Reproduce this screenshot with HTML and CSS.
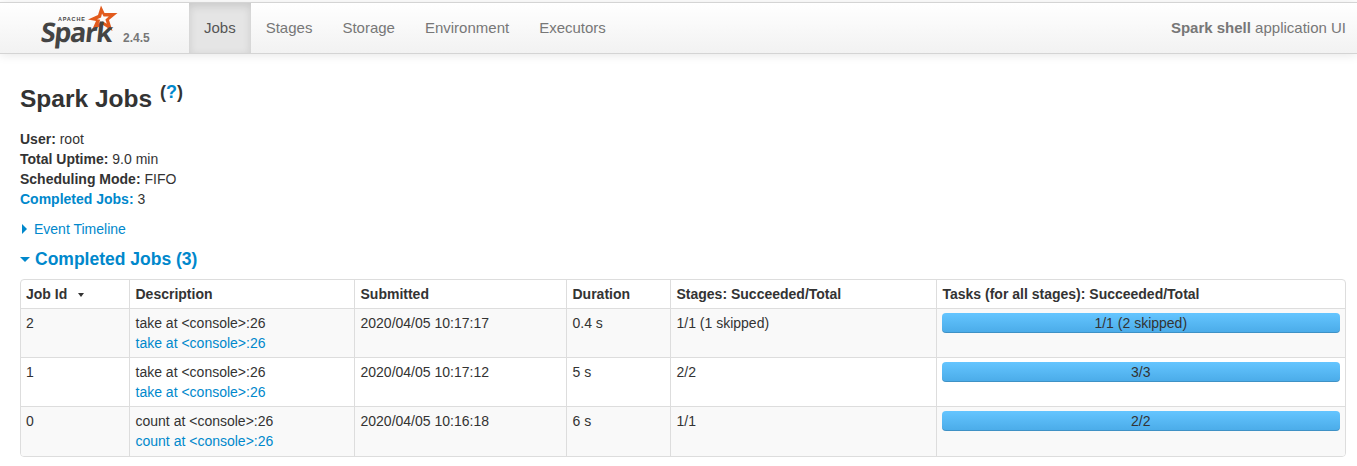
FILE: index.html
```html
<!DOCTYPE html>
<html lang="en">
<head>
<meta charset="utf-8">
<title>Spark shell - Spark Jobs</title>
<link rel="stylesheet" href="styles.css">
</head>
<body>
<header class="navbar">
  <div class="brand">
    <div class="logo">
      <svg class="logo-star" viewBox="0 0 36 32" width="36" height="32" aria-hidden="true">
        <path d="M16 2.500 L19.500 10 L32.500 10 L24 17 L27.500 28 L18 22 L7 27 L11 18 L3 16.500 L13 12 Z M17 10.600 L16 14.400 L12 16.200 L15.200 16.800 L13.600 20.400 L18 18.400 L21.800 20.800 L20.400 16.400 L23.800 13.600 L18.600 13.600 Z" fill="#e25a1c" fill-rule="evenodd"/>
      </svg>
      <span class="logo-apache">APACHE</span>
      <span class="logo-spark">Spark</span>
    </div>
    <span class="version">2.4.5</span>
  </div>
  <nav class="tabs">
    <a class="tab active">Jobs</a>
    <a class="tab">Stages</a>
    <a class="tab">Storage</a>
    <a class="tab">Environment</a>
    <a class="tab">Executors</a>
  </nav>
  <p class="app"><strong>Spark shell</strong> application UI</p>
</header>
<main class="content">
  <h1 class="title">Spark Jobs <sup class="help">(<a>?</a>)</sup></h1>
  <ul class="summary">
    <li><strong>User:</strong> root</li>
    <li><strong>Total Uptime:</strong> 9.0 min</li>
    <li><strong>Scheduling Mode:</strong> FIFO</li>
    <li><strong class="blue">Completed Jobs:</strong> 3</li>
  </ul>
  <div class="timeline"><span class="arrow-right"></span><a>Event Timeline</a></div>
  <h2 class="section"><span class="arrow-down"></span>Completed Jobs (3)</h2>
  <div class="table-wrap">
    <table class="jobs">
      <colgroup>
        <col class="c1"><col class="c2"><col class="c3"><col class="c4"><col class="c5"><col>
      </colgroup>
      <thead>
        <tr>
          <th>Job Id <span class="sort"></span></th>
          <th>Description</th>
          <th>Submitted</th>
          <th>Duration</th>
          <th>Stages: Succeeded/Total</th>
          <th>Tasks (for all stages): Succeeded/Total</th>
        </tr>
      </thead>
      <tbody>
        <tr class="odd">
          <td>2</td>
          <td>take at &lt;console&gt;:26<a class="link">take at &lt;console&gt;:26</a></td>
          <td>2020/04/05 10:17:17</td>
          <td>0.4 s</td>
          <td>1/1 (1 skipped)</td>
          <td class="bar-cell"><div class="bar">1/1 (2 skipped)</div></td>
        </tr>
        <tr>
          <td>1</td>
          <td>take at &lt;console&gt;:26<a class="link">take at &lt;console&gt;:26</a></td>
          <td>2020/04/05 10:17:12</td>
          <td>5 s</td>
          <td>2/2</td>
          <td class="bar-cell"><div class="bar">3/3</div></td>
        </tr>
        <tr class="odd">
          <td>0</td>
          <td>count at &lt;console&gt;:26<a class="link">count at &lt;console&gt;:26</a></td>
          <td>2020/04/05 10:16:18</td>
          <td>6 s</td>
          <td>1/1</td>
          <td class="bar-cell"><div class="bar">2/2</div></td>
        </tr>
      </tbody>
    </table>
  </div>
</main>
</body>
</html>
```
FILE: styles.css
```css
* { box-sizing: border-box; }
html, body { margin: 0; padding: 0; }
body {
  font-family: "Liberation Sans", Arial, sans-serif;
  font-size: 14px;
  line-height: 20px;
  color: #333;
  background: #fff;
  overflow: hidden;
}
.navbar {
  display: flex;
  align-items: stretch;
  height: 52px;
  margin-top: 2px;
  border-top: 1px solid #d4d4d4;
  border-bottom: 1px solid #d4d4d4;
  background: linear-gradient(to bottom, #fff, #f2f2f2);
  box-shadow: 0 1px 10px rgba(0, 0, 0, .1);
}
.brand {
  display: flex;
  width: 189px;
  flex: none;
}
.logo {
  position: relative;
  width: 123px;
  flex: none;
}
.logo-star { position: absolute; left: 85px; top: 0; }
.logo-apache {
  position: absolute;
  left: 58px;
  top: 13px;
  font-size: 5.500px;
  line-height: 6px;
  font-weight: 700;
  letter-spacing: .8px;
  color: #444;
}
.logo-spark {
  position: absolute;
  left: 41px;
  top: 18px;
  font-family: "Open Sans", "Liberation Sans", sans-serif;
  font-size: 27px;
  line-height: 22px;
  font-weight: 700;
  letter-spacing: -1.300px;
  color: #444;
  transform: skewX(-6deg);
}
.version {
  font-size: 12px;
  font-weight: 700;
  color: #777;
  line-height: 14px;
  margin-top: 28px;
}
.tabs { display: flex; }
.tab {
  display: flex;
  align-items: center;
  padding: 0 15px;
  font-size: 15px;
  color: #777;
}
.tab.active {
  color: #555;
  background: #e5e5e5;
  box-shadow: inset 0 3px 8px rgba(0, 0, 0, .125);
}
.app {
  margin: 0 11px 0 auto;
  align-self: center;
  font-size: 15px;
  color: #777;
}
.content { padding: 0 11px 0 20px; }
.title {
  margin: 25px 0 0;
  font-size: 24.500px;
  line-height: 40px;
  font-weight: 700;
  color: #333;
}
.help {
  font-size: 18px;
  line-height: 0;
  font-weight: 700;
  vertical-align: baseline;
  position: relative;
  top: -9px;
  margin-left: 1px;
}
.help a, .blue { color: #0088cc; }
.summary {
  list-style: none;
  margin: 10px 0 0;
  padding: 0;
}
.timeline {
  display: flex;
  align-items: center;
  margin-top: 10px;
  color: #0088cc;
}
.arrow-right {
  width: 0;
  height: 0;
  margin: 0 7px 0 2px;
  border-left: 5px solid #0088cc;
  border-top: 5px solid transparent;
  border-bottom: 5px solid transparent;
}
.section {
  display: flex;
  align-items: center;
  margin: 10px 0 0;
  font-size: 17.500px;
  line-height: 20px;
  font-weight: 700;
  color: #0088cc;
}
.arrow-down {
  width: 0;
  height: 0;
  margin-right: 5px;
  border-top: 5px solid #0088cc;
  border-left: 5px solid transparent;
  border-right: 5px solid transparent;
}
.table-wrap {
  margin-top: 10px;
  border: 1px solid #ddd;
  border-radius: 4px;
  overflow: hidden;
}
.jobs {
  width: 100%;
  table-layout: fixed;
  border-collapse: collapse;
}
.c1 { width: 108px; }
.c2 { width: 225px; }
.c3 { width: 212px; }
.c4 { width: 104px; }
.c5 { width: 266px; }
.jobs th, .jobs td {
  padding: 4px 5px 4px 6px;
  text-align: left;
  vertical-align: top;
  border-left: 1px solid #ddd;
  border-top: 1px solid #ddd;
}
.jobs th:first-child, .jobs td:first-child { border-left: 0; padding-left: 5px; }
.jobs thead th { border-top: 0; height: 28px; font-weight: 700; }
.jobs td { height: 49px; }
.jobs td.bar-cell { padding-left: 5px; }
.odd td { background: #f9f9f9; }
.link { display: block; color: #0088cc; }
.sort {
  display: inline-block;
  width: 0;
  height: 0;
  margin-left: 7px;
  vertical-align: 2px;
  border-top: 4px solid #333;
  border-left: 3px solid transparent;
  border-right: 3px solid transparent;
}
.bar {
  height: 20px;
  border-radius: 4px;
  text-align: center;
  line-height: 20px;
  color: #333;
  background: linear-gradient(to bottom, #64c5ff, #4aabe8);
  box-shadow: inset 0 -1px 0 rgba(0, 0, 0, .15);
}
```
